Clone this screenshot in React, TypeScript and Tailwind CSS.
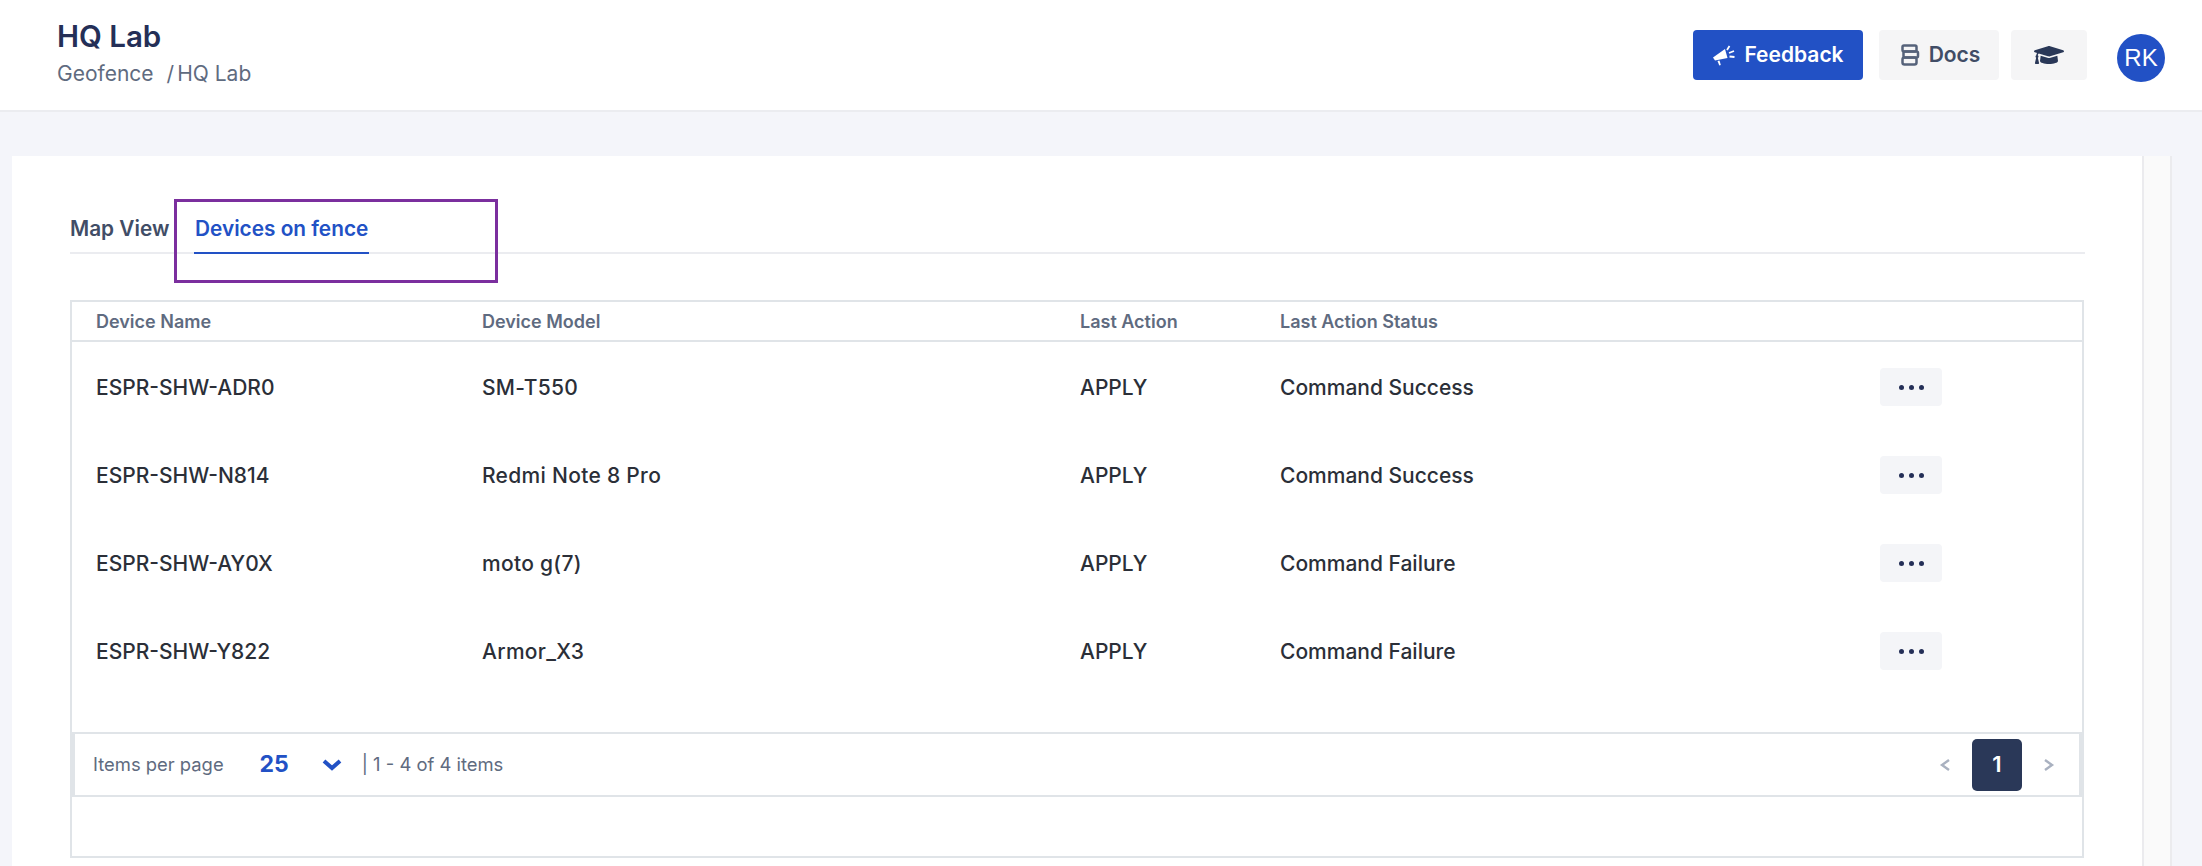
import React from "react";
import { FaGraduationCap } from "react-icons/fa";

const rows = [
  ["ESPR-SHW-ADR0", "SM-T550", "APPLY", "Command Success"],
  ["ESPR-SHW-N814", "Redmi Note 8 Pro", "APPLY", "Command Success"],
  ["ESPR-SHW-AY0X", "moto g(7)", "APPLY", "Command Failure"],
  ["ESPR-SHW-Y822", "Armor_X3", "APPLY", "Command Failure"],
];

function Megaphone() {
  return (
    <svg width="24" height="24" viewBox="0 0 24 24" fill="#fff">
      <path d="M1 14.5 L13 6 L15.5 15 L3 17.5 Z" />
      <path d="M5.5 18 L7.5 17.6 L8.8 22 L7.3 22.4 Z" />
      <path d="M15 7 L17.5 3" stroke="#fff" strokeWidth="1.8" fill="none" />
      <path d="M17 10 L22 8" stroke="#fff" strokeWidth="1.8" fill="none" />
      <path d="M17.5 13.5 L22.5 14" stroke="#fff" strokeWidth="1.8" fill="none" />
    </svg>
  );
}

function DocsIcon() {
  return (
    <svg className="ml-[2px]" width="20" height="22" viewBox="0 0 20 22" fill="none" stroke="#55627a" strokeWidth="2.5">
      <rect x="2.5" y="1.5" width="14" height="6" rx="1.5" />
      <rect x="3.5" y="7.5" width="14.5" height="6" rx="1.5" />
      <rect x="2.5" y="13.5" width="14" height="7" rx="2" />
    </svg>
  );
}

export default function App() {
  const font = { fontFamily: 'Inter, sans-serif' };
  return (
    <div style={font} className="relative h-[866px] w-full overflow-hidden bg-[#f4f5fa]">
      <header className="flex h-[112px] items-start justify-between border-b-2 border-[#ebecf0] bg-white pl-[57px] pr-[37px]">
        <div className="pt-[17px]">
          <div className="text-[29.5px] leading-[38px] font-semibold text-[#242f57]">HQ Lab</div>
          <div className="mt-[6px] flex text-[21px] leading-[26px] text-[#5f6b80]">
            <span>Geofence</span>
            <span className="ml-[13px] mr-[3px]">/</span>
            <span>HQ Lab</span>
          </div>
        </div>
        <div className="flex items-start pt-[30px]">
          <button className="flex h-[50px] w-[170px] items-center justify-center gap-[8px] rounded-[4px] bg-[#2251c5] text-[21px] font-semibold text-white">
            <Megaphone />
            Feedback
          </button>
          <button className="ml-[16px] flex h-[50px] w-[120px] items-center justify-center gap-[9px] rounded-[4px] bg-[#f5f5f6] text-[21px] font-semibold text-[#414d66]">
            <DocsIcon />
            Docs
          </button>
          <button className="ml-[12px] flex h-[50px] w-[76px] items-center justify-center rounded-[4px] bg-[#f5f5f6] text-[#2a3858]">
            <FaGraduationCap size={30} />
          </button>
          <div className="ml-[30px] mt-[4px] flex h-[48px] w-[48px] items-center justify-center rounded-full bg-[#2251c5] text-[24px] text-white" style={{ fontFamily: '"Liberation Sans", sans-serif' }}>
            RK
          </div>
        </div>
      </header>

      <div className="ml-[12px] mt-[44px] flex h-[710px] w-[2160px]">
        <main className="w-[2130px] bg-white pl-[58px] pt-[43px]">
          <div className="flex h-[55px] w-[2015px] border-b-2 border-[#ebecf0] text-[20.8px] font-semibold">
            <div className="h-[55px] w-[124px] pt-[16px] leading-[28px] text-[#414d66]">Map View</div>
            <div className="h-[55px] border-b-2 border-[#2251c5] px-[1px] pt-[16px] leading-[28px] text-[#2251c5]">Devices on fence</div>
          </div>
          <div className="mt-[46px] h-[558px] w-[2014px] border-2 border-[#e0e4e8]">
            <div className="grid h-[40px] grid-cols-[386px_598px_200px_1fr] items-center border-b-2 border-[#e0e4e8] pl-[24px] pt-[1px] text-[18px] font-semibold text-[#5f6b80]">
              <div>Device Name</div>
              <div>Device Model</div>
              <div>Last Action</div>
              <div>Last Action Status</div>
            </div>
            <div className="h-[390px] pt-[2px]">
              {rows.map((r) => (
                <div key={r[0]} className="grid h-[88px] grid-cols-[386px_598px_200px_600px_1fr] items-center pl-[24px] text-[21px] font-medium text-[#2b2f38]">
                  <div>{r[0]}</div>
                  <div className="tracking-[0.3px]">{r[1]}</div>
                  <div>{r[2]}</div>
                  <div>{r[3]}</div>
                  <button className="mb-[2px] flex h-[38px] w-[62px] items-center justify-center gap-[5px] rounded-[4px] bg-[#f4f5f8]">
                    <span className="h-[5px] w-[5px] rounded-full bg-[#242f57]" />
                    <span className="h-[5px] w-[5px] rounded-full bg-[#242f57]" />
                    <span className="h-[5px] w-[5px] rounded-full bg-[#242f57]" />
                  </button>
                </div>
              ))}
            </div>
            <div className="flex h-[65px] items-center justify-between border-2 border-l-[3px] border-r-[3px] border-[#e0e4e8] pl-[18px] pr-[24px] text-[18.4px] text-[#5f6b80]">
              <div className="flex items-center">
                <span>Items per page</span>
                <span className="ml-[36px] text-[23px] font-bold text-[#2251c5]">25</span>
                <svg className="ml-[33px]" width="20" height="12" viewBox="0 0 20 12" fill="none" stroke="#2251c5" strokeWidth="4">
                  <path d="M2 2l8 7 8-7" />
                </svg>
                <span className="ml-[20px]">| 1 - 4 of 4 items</span>
              </div>
              <div className="flex items-center">
                <svg width="12" height="14" viewBox="0 0 12 14" fill="none" stroke="#a9b1c0" strokeWidth="2.4"><path d="M10 2 3 7l7 5" /></svg>
                <div className="ml-[21px] flex h-[52px] w-[50px] items-center justify-center rounded-[5px] bg-[#2a3858] text-[22px] font-semibold text-white">1</div>
                <svg className="ml-[21px]" width="12" height="14" viewBox="0 0 12 14" fill="none" stroke="#a9b1c0" strokeWidth="2.4"><path d="m2 2 7 5-7 5" /></svg>
              </div>
            </div>
          </div>
        </main>
        <div className="h-full w-[30px] border-x-2 border-[#ebebee] bg-[#fafafa]" />
      </div>

      <div className="absolute left-[174px] top-[199px] h-[84px] w-[324px] border-[3px] border-[#7b2f9e]" />
    </div>
  );
}
